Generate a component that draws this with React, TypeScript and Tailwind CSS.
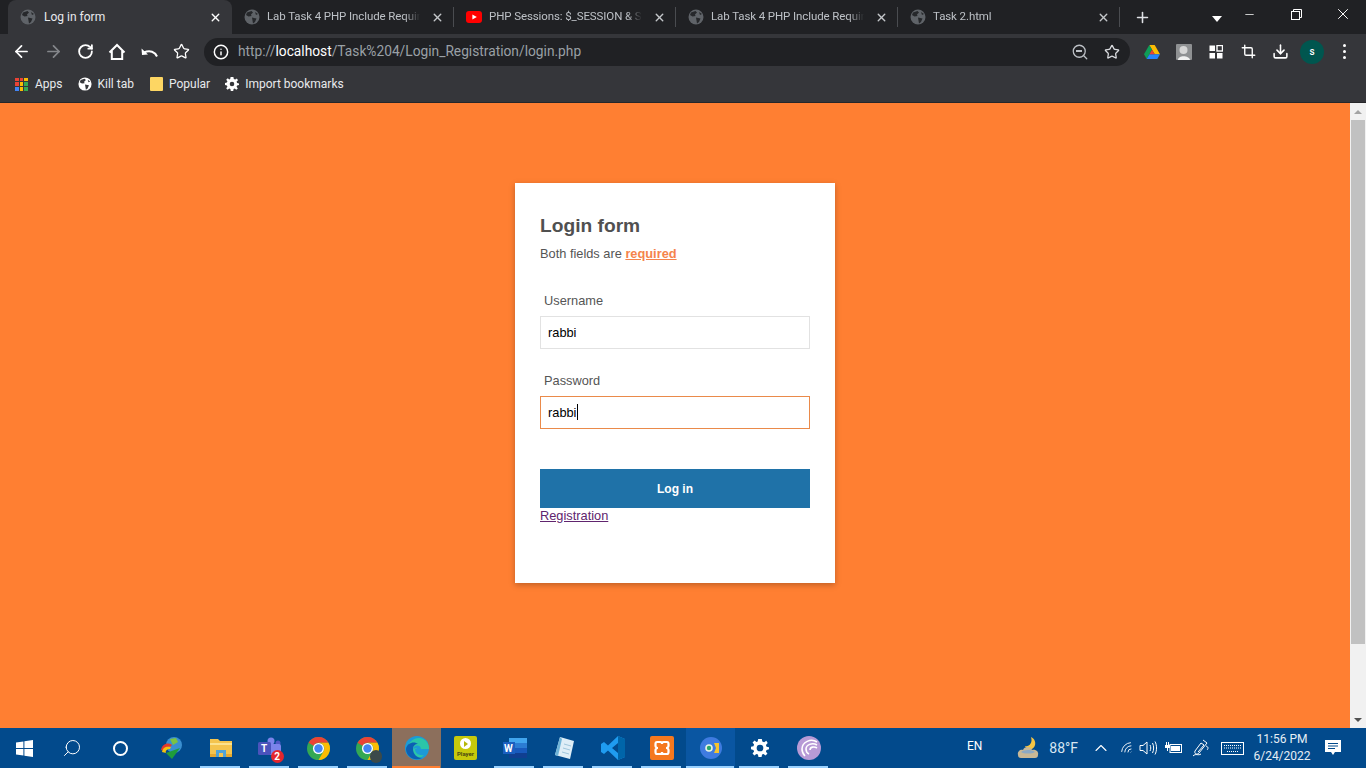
import React from "react";
import { ArrowLeft, ArrowRight, RotateCw, Info, Star, Search, Plus, X, Minus, Download, Crop, ChevronUp, Wifi } from "lucide-react";

const uiFont = { fontFamily: 'Roboto, "Noto Sans", sans-serif' };

const Globe = ({ size = 16, color = "#5f6368", land = "#26282b" }: { size?: number; color?: string; land?: string }) => (
  <svg width={size} height={size} viewBox="0 0 16 16" className="shrink-0">
    <circle cx="8" cy="8" r="7.5" fill={color} />
    <path d="M3 3.5 L7.5 2 L9 3.5 L7 5.5 L7.5 7 L4.5 7.5 L2 6 Z M8 8.5 L12.5 9.5 L11 13 L9 14.5 L8.5 11.5 Z M11 3 L14 5 L12 6 Z" fill={land} />
  </svg>
);

const YouTube = () => (
  <svg width="16" height="12" viewBox="0 0 16 12" className="shrink-0">
    <rect width="16" height="12" rx="3" fill="#f00" />
    <path d="M6.4 3.4 L10.8 6 L6.4 8.6 Z" fill="#fff" />
  </svg>
);

type TabProps = { title: string; width: string; youtube?: boolean; active?: boolean };

function Tab({ title, width, youtube, active }: TabProps) {
  return (
    <div
      className={`${width} h-[34px] flex items-center shrink-0 relative ${active ? "bg-[#35363a] rounded-t-lg text-[#e8eaed]" : "text-[#bdc1c6]"}`}
    >
      <div className={`${active ? "w-[36px]" : "w-[35px]"} pl-[12px] shrink-0`}>{youtube ? <YouTube /> : <Globe />}</div>
      <span
        className={`flex-1 whitespace-nowrap overflow-hidden ${active ? "text-[12px]" : "text-[11.5px] tracking-[-0.1px]"}`}
        style={active ? undefined : { maskImage: "linear-gradient(to right, #000 90%, transparent 100%)" }}
      >
        {title}
      </span>
      <X size={13} strokeWidth={2.6} className={`shrink-0 ${active ? "mx-[10px] text-white" : "ml-[11px] mr-[9px] text-[#c4c7ca]"}`} />
    </div>
  );
}

const TabSeparator = () => <div className="w-px h-[20px] bg-[#4a4c50] shrink-0" />;

function TitleBar() {
  return (
    <div className="h-[34px] bg-[#202124] flex items-center pl-[8px]">
      <Tab title="Log in form" width="w-[224px]" active />
      <Tab title="Lab Task 4 PHP Include Requir" width="w-[221px]" />
      <TabSeparator />
      <Tab title="PHP Sessions: $_SESSION & S" width="w-[221px]" youtube />
      <TabSeparator />
      <Tab title="Lab Task 4 PHP Include Requir" width="w-[221px]" />
      <TabSeparator />
      <Tab title="Task 2.html" width="w-[221px]" />
      <TabSeparator />
      <div className="w-[44px] flex justify-center text-[#dfe1e5]">
        <Plus size={17} strokeWidth={2.2} />
      </div>
      <div className="w-[48px]" />
      <div className="w-0 h-0 border-x-[5px] border-x-transparent border-t-[6px] border-t-white mt-[3px]" />
      <div className="flex-1 flex items-center justify-end self-start h-[28px] text-white">
        <div className="w-[47px] flex justify-center">
          <Minus size={13} strokeWidth={1.4} />
        </div>
        <div className="w-[47px] flex justify-center">
          <svg width="13" height="13" viewBox="0 0 13 13" fill="none" stroke="currentColor">
            <rect x="1.5" y="3.5" width="8" height="8" fill="#202124" />
            <path d="M3.5 3.5 V1.5 H11.5 V9.5 H9.5" />
          </svg>
        </div>
        <div className="w-[46px] flex justify-center">
          <X size={18} strokeWidth={1.3} />
        </div>
      </div>
    </div>
  );
}

const HomeIcon = () => (
  <svg width="20" height="20" viewBox="0 0 20 20" fill="none" stroke="#fff" strokeWidth="2">
    <path d="M2.5 10.5 L10 3 L17.5 10.5 M4.8 9 V17 H15.2 V9" />
  </svg>
);

const UndoIcon = () => (
  <svg width="20" height="20" viewBox="0 0 20 20" fill="none" stroke="#fff" strokeWidth="2">
    <path d="M18 14.5 C16 10 11 7.5 5 10.5" />
    <path d="M2.5 6.5 L3 13 L9 12.5 Z" fill="#fff" stroke="none" />
  </svg>
);

const DriveIcon = () => (
  <svg width="16" height="14" viewBox="0 0 16 14">
    <path d="M5.3 0 H10.7 L16 9.3 H10.7 Z" fill="#fbbc04" />
    <path d="M5.3 0 L8 4.7 L2.7 14 L0 9.3 Z" fill="#0f9d58" />
    <path d="M5.4 9.3 H16 L13.3 14 H2.7 Z" fill="#2684fc" />
    <path d="M8 4.7 L10.7 9.3 H5.4 Z" fill="#ea4335" />
  </svg>
);

const TileIcon = () => (
  <svg width="14" height="14" viewBox="0 0 14 14" fill="#fff">
    <rect x="0.5" y="0.5" width="5.5" height="5.5" />
    <rect x="8" y="0.5" width="5.5" height="5.5" fill="none" stroke="#fff" strokeWidth="1.4" />
    <rect x="0.5" y="8" width="5.5" height="5.5" />
    <rect x="8" y="8" width="5.5" height="5.5" />
  </svg>
);

const PersonTile = () => (
  <svg width="16" height="16" viewBox="0 0 16 16">
    <rect width="16" height="16" rx="1" fill="#8f9193" />
    <circle cx="7.5" cy="6" r="4" fill="#d6d6d6" />
    <path d="M2 16 C2 11 13 11 14 16 Z" fill="#f0f0f0" />
  </svg>
);

function ToolbarButton({ children, width = "w-[32px]" }: { children: React.ReactNode; width?: string }) {
  return <div className={`${width} h-[32px] flex items-center justify-center shrink-0`}>{children}</div>;
}

function Toolbar() {
  return (
    <div className="h-[35px] bg-[#35363a] flex items-center pl-[5px]">
      <ToolbarButton>
        <ArrowLeft size={19} strokeWidth={2.2} className="text-white" />
      </ToolbarButton>
      <ToolbarButton>
        <ArrowRight size={19} strokeWidth={2.2} className="text-[#85878b]" />
      </ToolbarButton>
      <ToolbarButton>
        <RotateCw size={17} strokeWidth={2.6} className="text-white" />
      </ToolbarButton>
      <ToolbarButton>
        <HomeIcon />
      </ToolbarButton>
      <ToolbarButton>
        <UndoIcon />
      </ToolbarButton>
      <ToolbarButton>
        <Star size={17} strokeWidth={1.8} className="text-white" />
      </ToolbarButton>
      <div className="ml-[7px] w-[926px] h-[28px] rounded-full bg-[#202124] flex items-center pl-[9px]">
        <Info size={16} strokeWidth={2.2} className="text-white shrink-0" />
        <span className="ml-[9px] text-[13.75px] text-[#9aa0a6] whitespace-nowrap flex-1">
          http://<span className="text-white">localhost</span>/Task%204/Login_Registration/login.php
        </span>
        <div className="relative w-[18px] h-[18px] text-[#bdc1c6] mr-[15px]">
          <Search size={18} strokeWidth={1.7} />
          <div className="absolute left-[5px] top-[7.5px] w-[6px] h-[1.5px] bg-[#bdc1c6]" />
        </div>
        <Star size={16} strokeWidth={1.9} className="text-[#dadce0] mr-[10px]" />
      </div>
      <div className="ml-[6px] flex items-center">
        <ToolbarButton>
          <DriveIcon />
        </ToolbarButton>
        <ToolbarButton>
          <PersonTile />
        </ToolbarButton>
        <ToolbarButton>
          <TileIcon />
        </ToolbarButton>
        <ToolbarButton>
          <Crop size={15} strokeWidth={2.2} className="text-white" />
        </ToolbarButton>
        <ToolbarButton>
          <Download size={17} strokeWidth={2.2} className="text-white" />
        </ToolbarButton>
        <ToolbarButton>
          <div className="w-[24px] h-[24px] rounded-full bg-[#00564f] flex items-center justify-center text-[10px] text-white font-medium">
            s
          </div>
        </ToolbarButton>
        <ToolbarButton>
          <div className="flex flex-col gap-[3px]">
            <div className="w-[3px] h-[3px] rounded-full bg-white" />
            <div className="w-[3px] h-[3px] rounded-full bg-white" />
            <div className="w-[3px] h-[3px] rounded-full bg-white" />
          </div>
        </ToolbarButton>
      </div>
    </div>
  );
}

const AppsIcon = () => {
  const dots = ["#ea4335", "#ea4335", "#fbbc04", "#ea4335", "#fbbc04", "#34a853", "#4285f4", "#fbbc04", "#34a853"];
  return (
    <div className="grid grid-cols-3 gap-[1px] w-[13px] h-[13px]">
      {dots.map((c, i) => (
        <div key={i} style={{ backgroundColor: c }} />
      ))}
    </div>
  );
};

const GearIcon = () => (
  <svg width="14" height="14" viewBox="0 0 14 14">
    <path
      fillRule="evenodd"
      fill="#fff"
      d="M5.6 0 H8.4 L8.8 1.9 L10.2 2.5 L11.9 1.4 L13 3.2 L11.6 4.6 L12.1 6 L14 6.4 V8 L12.1 8.5 L11.6 9.8 L12.8 11.4 L11.2 12.8 L9.8 11.6 L8.6 12.1 L8.2 14 H5.8 L5.4 12.1 L4.2 11.6 L2.6 12.8 L1.2 11.2 L2.4 9.8 L1.9 8.5 L0 8 V6 L1.9 5.6 L2.4 4.2 L1.2 2.8 L2.8 1.2 L4.2 2.4 L5.2 1.9 Z M7 4.7 A2.3 2.3 0 1 0 7 9.3 A2.3 2.3 0 1 0 7 4.7 Z"
    />
  </svg>
);

function BookmarksBar() {
  return (
    <div className="h-[34px] bg-[#35363a] border-b border-[#26272a] flex items-center pl-[15px] pb-[3px] text-[12px] text-[#e8eaed]">
      <AppsIcon />
      <span className="ml-[7px]">Apps</span>
      <div className="ml-[15px]">
        <Globe size={14} color="#fff" land="#35363a" />
      </div>
      <span className="ml-[6px]">Kill tab</span>
      <div className="ml-[16px] w-[13px] h-[14px] bg-[#fdd663] rounded-[1px]" />
      <span className="ml-[6px]">Popular</span>
      <div className="ml-[15px]">
        <GearIcon />
      </div>
      <span className="ml-[6px]">Import bookmarks</span>
    </div>
  );
}

function Scrollbar() {
  return (
    <div className="w-[16px] bg-[#f1f1f1] flex flex-col items-center shrink-0">
      <div className="h-[17px] flex items-center justify-center">
        <div className="w-0 h-0 border-x-[4px] border-x-transparent border-b-[4px] border-b-[#a3a3a3]" />
      </div>
      <div className="w-[14px] h-[524px] bg-[#c1c1c1]" />
      <div className="flex-1" />
      <div className="h-[17px] flex items-center justify-center">
        <div className="w-0 h-0 border-x-[4px] border-x-transparent border-t-[4px] border-t-[#505050]" />
      </div>
    </div>
  );
}

function Field({ label, value, focused }: { label: string; value: string; focused?: boolean }) {
  return (
    <div>
      <label className="block pl-[4px] text-[12.8px] leading-[16px] text-[#555]">{label}</label>
      <div className="relative mt-[7px]">
        <input
          readOnly
          value={value}
          className={`block w-full h-[33px] px-[7px] text-[12.8px] text-black bg-white border outline-none ${focused ? "border-[#ea8a4a]" : "border-[#e2e2e2]"}`}
        />
        {focused && <span className="absolute left-[37px] top-[8px] w-px h-[16px] bg-black" />}
      </div>
    </div>
  );
}

function LoginCard() {
  return (
    <div
      className="w-[320px] h-[400px] bg-white shadow-[0_2px_6px_rgba(0,0,0,0.25)] px-[25px] pt-[31px]"
      style={{ fontFamily: '"Liberation Sans", Arial, sans-serif' }}
    >
      <h2 className="text-[19.2px] leading-[23px] font-bold text-[#505050]">Login form</h2>
      <p className="mt-[9px] text-[12.8px] leading-[16px] text-[#555]">
        Both fields are <span className="font-bold underline text-[#f5844c]">required</span>
      </p>
      <div className="mt-[31px]">
        <Field label="Username" value="rabbi" />
      </div>
      <div className="mt-[24px]">
        <Field label="Password" value="rabbi" focused />
      </div>
      <button className="mt-[40px] block w-full h-[39px] bg-[#1f72a8] text-white text-[12px] font-bold">Log in</button>
      <a className="block text-[12.8px] leading-[15px] text-[#60246e] underline">Registration</a>
    </div>
  );
}

function TaskItem({ children, running, active, focused, width = "w-[49px]" }: { children: React.ReactNode; running?: boolean; active?: boolean; focused?: boolean; width?: string }) {
  return (
    <div
      className={`${width} h-[40px] flex items-center justify-center relative shrink-0 ${active ? "bg-[#8c6f5c]" : focused ? "bg-[#0a56a2]" : ""}`}
    >
      {children}
      {running && (
        <div className={`absolute bottom-0 h-[2px] ${active ? "left-0 right-px bg-[#ff7f32]" : focused ? "left-0 right-px bg-[#99d1ff]" : "left-[4px] right-[5px] bg-[#99d1ff]"}`} />
      )}
    </div>
  );
}

const Windows = () => (
  <svg width="17" height="17" viewBox="0 0 17 17" fill="#fff">
    <path d="M0 2.4 L7.4 1.4 V8 H0 Z M8.4 1.2 L17 0 V8 H8.4 Z M0 9 H7.4 V15.6 L0 14.6 Z M8.4 9 H17 V17 L8.4 15.8 Z" />
  </svg>
);

const Idm = () => (
  <svg width="24" height="24" viewBox="0 0 24 24">
    <circle cx="14" cy="9" r="8" fill="#3a8fd0" />
    <path d="M10 3 L16 2 L18 6 L13 9 Z" fill="#7cc242" />
    <path d="M1 14 C2 8 8 6 12 9 L10 11 C7 10 5 12 5 15 Z" fill="#e2382d" />
    <path d="M2 16 C3 11 6 10 11 11 L10 13 C7 13 5 15 6 17 Z" fill="#f4c20d" />
    <path d="M6 17 L20 12 L12 23 Z" fill="#1f9d3a" />
  </svg>
);

const Explorer = () => (
  <svg width="22" height="20" viewBox="0 0 22 20">
    <path d="M0 1 H8 L10 3 H22 V19 H0 Z" fill="#f4c44e" />
    <rect y="5" width="22" height="2" fill="#fbe28f" />
    <rect x="0" y="16" width="22" height="3" fill="#e5a82f" />
    <rect x="6" y="12" width="10" height="7" fill="#4fa3d8" />
    <rect x="9" y="15" width="4" height="4" fill="#f4c44e" />
  </svg>
);

const Teams = () => (
  <div className="relative w-[24px] h-[24px]">
    <svg width="24" height="24" viewBox="0 0 24 24">
      <circle cx="13" cy="5" r="3.5" fill="#7b83eb" />
      <circle cx="20" cy="7" r="2.5" fill="#5059c9" />
      <rect x="10" y="8" width="13" height="11" rx="2" fill="#7b83eb" />
      <rect x="0" y="6" width="13" height="13" rx="1.5" fill="#4b53bc" />
    </svg>
    <span className="absolute left-[3.5px] top-[6px] text-[10px] leading-[13px] font-bold text-white">T</span>
    <div className="absolute -right-[2px] -bottom-[3px] w-[13px] h-[13px] rounded-full bg-[#e3262e] flex items-center justify-center text-[10px] font-bold text-white">
      2
    </div>
  </div>
);

const Chrome = ({ size = 23 }: { size?: number }) => (
  <svg width={size} height={size} viewBox="0 0 24 24" className="block">
    <circle cx="12" cy="12" r="12" fill="#34a853" />
    <path d="M12 0 A12 12 0 0 1 22.39 6 H12 A6 6 0 0 0 6.8 9 L1.6 6 A12 12 0 0 1 12 0 Z" fill="#ea4335" />
    <path d="M22.39 6 A12 12 0 0 1 12 24 L17.2 15 A6 6 0 0 0 12 6 Z" fill="#fbbc04" />
    <circle cx="12" cy="12" r="5.8" fill="#fff" />
    <circle cx="12" cy="12" r="4.4" fill="#4285f4" />
  </svg>
);

const Edge = () => (
  <svg width="24" height="24" viewBox="0 0 24 24">
    <circle cx="12" cy="12" r="12" fill="#1c9ad6" />
    <path d="M2 16 C1 7 9 1 15 2 C21 3 24 8 24 13 H10 C10 17 14 20 19 19 C15 24 5 24 2 16 Z" fill="#2bc5a8" />
    <path d="M1 13 C2 6 10 5 13 8 C10 8 8 10 8 13 C8 18 12 22 17 22 C9 26 1 20 1 13 Z" fill="#0c5fb3" />
    <path d="M8 13 C9 9 15 8 16 13 H12 C12 12 9 12 8 13 Z" fill="#1c9ad6" />
  </svg>
);

const PlayerIcon = () => (
  <div className="w-[23px] h-[24px] rounded-[2px] bg-[#c7c90c] flex flex-col items-center pt-[2px]">
    <div className="w-[11px] h-[11px] rounded-full bg-white flex items-center justify-center">
      <div className="w-0 h-0 border-y-[3px] border-y-transparent border-l-[4px] border-l-[#b5b70a]" />
    </div>
    <span className="text-[6px] leading-[9px] font-bold text-[#4a4a10]">Player</span>
  </div>
);

const Word = () => (
  <div className="relative w-[24px] h-[20px]">
    <svg width="24" height="20" viewBox="0 0 24 20">
      <rect x="6" y="0" width="18" height="5" fill="#41a5ee" />
      <rect x="6" y="5" width="18" height="5" fill="#2b7cd3" />
      <rect x="6" y="10" width="18" height="5" fill="#185abd" />
      <rect x="6" y="15" width="18" height="5" fill="#103f91" />
      <rect x="0" y="4" width="12" height="12" fill="#1a5fc0" />
    </svg>
    <span className="absolute left-[1.5px] top-[3.5px] text-[10px] leading-[13px] font-bold text-white">W</span>
  </div>
);

const Notepad = () => (
  <svg width="24" height="24" viewBox="0 0 24 24">
    <path d="M8 1 L22 5 L18 23 L3 19 Z" fill="#dfeef7" />
    <path d="M8 1 L3 19 L6 20 L10 3 Z" fill="#6fb4d8" />
    <path d="M12 8 L19 10 M11 12 L18 14 M10 16 L17 18" stroke="#9fc6dc" strokeWidth="1" />
  </svg>
);

const VsCode = () => (
  <svg width="24" height="24" viewBox="0 0 24 24">
    <path d="M17 0 L24 3 V21 L17 24 L7 14.5 L3 18 L0 16 V8 L3 6 L7 9.5 Z M17 7 L11 12 L17 17 Z" fill="#1f9cf0" />
    <path d="M17 0 L24 3 V21 L17 24 Z" fill="#0065a9" />
  </svg>
);

const Xampp = () => (
  <div className="w-[24px] h-[24px] rounded-[2px] bg-[#f5781f] flex items-center justify-center">
    <svg width="18" height="18" viewBox="0 0 18 18" fill="none" stroke="#fff" strokeWidth="2.2">
      <path d="M4 3 H7.5 C8.5 3 9 4 9 5 C9 4 9.5 3 10.5 3 H14 C15 3 15.5 4 15.5 5 V7 C15.5 8 14 9 13 9 C14 9 15.5 10 15.5 11 V13 C15.5 14 15 15 14 15 H10.5 C9.5 15 9 14 9 13 C9 14 8.5 15 7.5 15 H4 C3 15 2.5 14 2.5 13 V11 C2.5 10 4 9 5 9 C4 9 2.5 8 2.5 7 V5 C2.5 4 3 3 4 3 Z" />
    </svg>
  </div>
);

const Capture = () => (
  <svg width="22" height="22" viewBox="0 0 22 22">
    <circle cx="11" cy="11" r="11" fill="#3f7be0" />
    <path d="M14 6 H19 V16 H14 L16 11 Z" fill="#f5c430" />
    <circle cx="9" cy="11" r="3.8" fill="#e8f3e4" />
    <circle cx="9" cy="11" r="2.2" fill="#2aa76a" />
  </svg>
);

const TaskGear = () => (
  <svg width="18" height="18" viewBox="0 0 14 14">
    <path
      fillRule="evenodd"
      fill="#fff"
      d="M5.6 0 H8.4 L8.8 1.9 L10.2 2.5 L11.9 1.4 L13 3.2 L11.6 4.6 L12.1 6 L14 6.4 V8 L12.1 8.5 L11.6 9.8 L12.8 11.4 L11.2 12.8 L9.8 11.6 L8.6 12.1 L8.2 14 H5.8 L5.4 12.1 L4.2 11.6 L2.6 12.8 L1.2 11.2 L2.4 9.8 L1.9 8.5 L0 8 V6 L1.9 5.6 L2.4 4.2 L1.2 2.8 L2.8 1.2 L4.2 2.4 L5.2 1.9 Z M7 4.4 A2.6 2.6 0 1 0 7 9.6 A2.6 2.6 0 1 0 7 4.4 Z"
    />
  </svg>
);

const Torrent = () => (
  <svg width="24" height="24" viewBox="0 0 24 24" fill="none">
    <circle cx="12" cy="12" r="12" fill="#b79ad6" />
    <path d="M20 6 C14 2 5 6 5 13 C5 16 6 18 8 20 M20 9 C15 6 9 9 9 13 C9 15 10 17 12 18 M20 12 C17 10 13 11 13 14" stroke="#fff" strokeWidth="1.6" />
  </svg>
);

const Weather = () => (
  <svg width="22" height="22" viewBox="0 0 22 22">
    <path d="M14 0 C19 2 20 9 15 12 C12 13 9 11 8 9 C12 10 16 6 14 0 Z" fill="#f6c544" />
    <path d="M1 18 C0 14 4 12 6 13 C7 9 14 9 15 13 C19 12 22 15 21 18 C21 20 20 21 18 21 H4 C2 21 1 20 1 18 Z" fill="#c8b896" />
    <path d="M4 15 C6 13 14 12 18 15 C15 17 7 17 4 15 Z" fill="#8ba9c4" />
  </svg>
);

const Action = () => (
  <svg width="16" height="16" viewBox="0 0 16 16">
    <path d="M0 0 H16 V12 H10 L8 15 L6 12 H0 Z" fill="#fff" />
    <path d="M3 3.5 H13 M3 6 H13 M3 8.5 H10" stroke="#024a8c" strokeWidth="1" />
  </svg>
);

const TrayIcon = ({ children, width }: { children: React.ReactNode; width: string }) => (
  <div className={`${width} flex items-center justify-center shrink-0`}>{children}</div>
);

function Taskbar() {
  return (
    <div className="h-[40px] bg-[#024a8c] flex items-center text-white" style={uiFont}>
      <TaskItem width="w-[48px]">
        <Windows />
      </TaskItem>
      <TaskItem width="w-[48px]">
        <Search size={20} strokeWidth={1.2} className="-scale-x-100" />
      </TaskItem>
      <TaskItem width="w-[51px] pr-[3px]">
        <div className="w-[15px] h-[15px] rounded-full border-2 border-white" />
      </TaskItem>
      <TaskItem>
        <Idm />
      </TaskItem>
      <TaskItem running>
        <Explorer />
      </TaskItem>
      <TaskItem running>
        <Teams />
      </TaskItem>
      <TaskItem running>
        <Chrome />
      </TaskItem>
      <TaskItem running>
        <div className="relative">
          <Chrome />
          <div className="absolute -right-[3px] -bottom-[3px] w-[12px] h-[13px] rounded-full bg-[#3b4a4a]" />
        </div>
      </TaskItem>
      <TaskItem running active>
        <Edge />
      </TaskItem>
      <TaskItem>
        <PlayerIcon />
      </TaskItem>
      <TaskItem running>
        <Word />
      </TaskItem>
      <TaskItem running>
        <Notepad />
      </TaskItem>
      <TaskItem running>
        <VsCode />
      </TaskItem>
      <TaskItem running>
        <Xampp />
      </TaskItem>
      <TaskItem running focused>
        <Capture />
      </TaskItem>
      <TaskItem running>
        <TaskGear />
      </TaskItem>
      <TaskItem running>
        <Torrent />
      </TaskItem>

      <div className="flex-1" />
      <span className="text-[12px] mr-[35px] -mt-[5px]">EN</span>
      <Weather />
      <span className="text-[14px] ml-[10px] text-[#d8e6f2]">88°F</span>
      <TrayIcon width="w-[36px] ml-[5px]">
        <ChevronUp size={20} strokeWidth={1.3} />
      </TrayIcon>
      <TrayIcon width="w-[16px]">
        <Wifi size={15} strokeWidth={1.4} className="-rotate-45" />
      </TrayIcon>
      <TrayIcon width="w-[26px]">
        <svg width="18" height="16" viewBox="0 0 18 16" fill="none" stroke="#fff" strokeWidth="1">
          <path d="M1 5.5 H4 L8 2 V14 L4 10.5 H1 Z M11 5 C12 7 12 9 11 11 M13.5 3 C15 6 15 10 13.5 13 M16 1.5 C18 5 18 11 16 14.5" />
        </svg>
      </TrayIcon>
      <TrayIcon width="w-[24px]">
        <svg width="17" height="12" viewBox="0 0 17 12" fill="#fff">
          <rect x="5" y="2.5" width="11.5" height="8" fill="none" stroke="#fff" />
          <rect x="6" y="4" width="9" height="5" />
          <path d="M1 0 V3 H0 V6 H2 V9 H3 V6 H5 V3 H4 V0 H3 V3 H2 V0 Z" />
        </svg>
      </TrayIcon>
      <TrayIcon width="w-[32px]">
        <svg width="18" height="18" viewBox="0 0 18 18" fill="none" stroke="#fff" strokeWidth="1">
          <path d="M11 1 L15 4 L7 14 C5 16 2 15 3 12 L9 4 L12 6 L6 13 M1 17 C4 14 6 17 9 15 M14 7 C17 8 16 10 15 11" />
        </svg>
      </TrayIcon>
      <TrayIcon width="w-[30px]">
        <svg width="23" height="13" viewBox="0 0 23 13" fill="none" stroke="#fff" strokeWidth="1">
          <rect x="0.5" y="0.5" width="22" height="12" />
          <path d="M3 3.5 H20 M3 6 H20 M6 9.5 H17" strokeDasharray="1 1" />
        </svg>
      </TrayIcon>
      <div className="w-[70px] -mt-[1px] text-center text-[12px] leading-[17px] text-[#e6eef5]">
        <div>11:56 PM</div>
        <div>6/24/2022</div>
      </div>
      <div className="w-[32px] mr-[17px] flex justify-center">
        <Action />
      </div>
    </div>
  );
}

export default function App() {
  return (
    <div className="w-[1366px] h-[768px] flex flex-col overflow-hidden">
      <div style={uiFont}>
        <TitleBar />
        <Toolbar />
        <BookmarksBar />
      </div>
      <div className="flex-1 flex min-h-0">
        <div className="flex-1 bg-[#ff7f32] flex justify-center pt-[80px]">
          <LoginCard />
        </div>
        <Scrollbar />
      </div>
      <Taskbar />
    </div>
  );
}
